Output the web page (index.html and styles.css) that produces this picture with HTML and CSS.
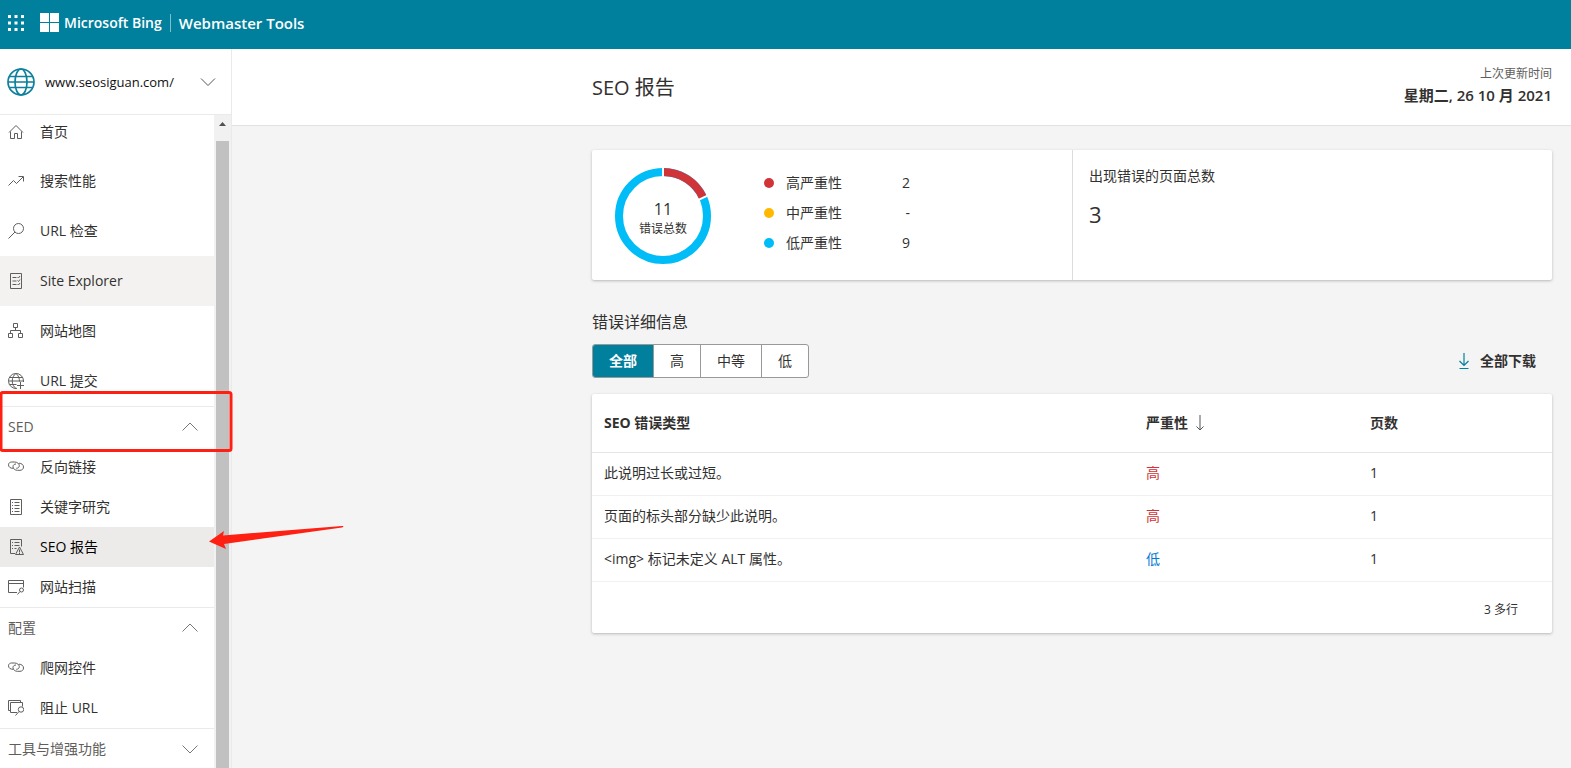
FILE: index.html
```html
<!DOCTYPE html>
<html lang="zh-CN">
<head>
<meta charset="utf-8">
<title>SEO 报告 - Webmaster Tools</title>
<link rel="stylesheet" href="styles.css">
</head>
<body>
<header class="topbar">
  <button class="waffle" aria-label="应用">
    <svg width="16" height="16" viewBox="0 0 16 16" fill="currentColor"><path d="M0 0h3v3H0zM6.500 0h3v3h-3zM13 0h3v3h-3zM0 6.500h3v3H0zM6.500 6.500h3v3h-3zM13 6.500h3v3h-3zM0 13h3v3H0zM6.500 13h3v3h-3zM13 13h3v3h-3z"/></svg>
  </button>
  <svg class="ms-logo" width="19" height="19" viewBox="0 0 19 19" fill="currentColor"><path d="M0 0h9v9H0zM10 0h9v9h-9zM0 10h9v9H0zM10 10h9v9h-9z"/></svg>
  <span class="brand">Microsoft Bing</span>
  <span class="brand-sep"></span>
  <span class="product">Webmaster Tools</span>
</header>
<div class="shell">
  <aside class="sidebar">
    <button class="site">
      <svg width="28" height="28" viewBox="0 0 28 28" fill="none" stroke="#0d809c" stroke-width="1.700"><circle cx="14" cy="14" r="13"/><ellipse cx="14" cy="14" rx="6" ry="13"/><path d="M2.500 8.500h23M1 14h26M2.500 19.500h23" /></svg>
      <span class="site-name">www.seosiguan.com/</span>
      <svg width="16" height="10" viewBox="0 0 16 10" fill="none" stroke="#555"><path d="M1 1.500l7 7 7-7"/></svg>
    </button>
    <div class="scroll">
      <nav class="nav">
        <a class="item tall first" href="#"><svg class="ic" viewBox="0 0 16 16"><path d="M1 8.500L8 1.500l7 7M2.500 7.500v7h4v-5h3v5h4v-7"/></svg>首页</a>
        <a class="item tall" href="#"><svg class="ic" viewBox="0 0 16 16"><path d="M.5 12.500l5-5 3 3L15 4M10.500 3.500h5v5"/></svg>搜索性能</a>
        <a class="item tall" href="#"><svg class="ic" viewBox="0 0 16 16"><circle cx="10.500" cy="5.500" r="5"/><path d="M7 9l-6.500 6.500"/></svg>URL 检查</a>
        <a class="item tall hover" href="#"><svg class="ic" viewBox="0 0 16 16"><path d="M2.500.5h11v15h-11zM4.500 4.500h4M4.500 8h4M4.500 11.500h4M9.500 4l1 1 1.500-2M9.500 7.500l1 1 1.500-2M9.500 11l1 1 1.500-2"/></svg>Site Explorer</a>
        <a class="item tall" href="#"><svg class="ic" viewBox="0 0 16 16"><path d="M5.500.5h4v4h-4zM.5 10.500h4v4h-4zM10.500 10.500h4v4h-4zM7.500 4.500v3M2.500 10.500v-3h10v3"/></svg>网站地图</a>
        <a class="item tall" href="#"><svg class="ic" viewBox="0 0 16 16"><path d="M9 15.400A7.500 7.500 0 1 1 15.500 8v1M.5 8h15M1.500 4.500h13M1.500 11.500h7M8 15.500c-5-3-5-12 0-15 2.500 2 3.500 5 3.500 8M12.500 9v7M9 12.500h7"/></svg>URL 提交</a>
        <button class="group">SED<svg class="chev" viewBox="0 0 16 10"><path d="M.5 8.500L8 1l7.500 7.500"/></svg></button>
        <a class="item" href="#"><svg class="ic" viewBox="0 0 16 16"><path d="M5 9.300C2.500 9.300.5 8 .5 5.800.5 4 2 3 3.800 3h2.700c2.500 0 4.800 1.500 4.800 3.700 0 1.600-1.300 2.600-3 2.600M11 4.200c2.500 0 4.500 1.500 4.500 3.800 0 2-1.500 3.300-3.500 3.300H9.500C7 11.300 5 9.800 5 7.700 5 6 6.300 5 8 5"/></svg>反向链接</a>
        <a class="item" href="#"><svg class="ic" viewBox="0 0 16 16"><path d="M2.500.5h11v15h-11zM4 3.500h1M6.500 3.500h5M4 6.500h1M6.500 6.500h5M4 9.500h1M6.500 9.500h5M4 12.500h1M6.500 12.500h5"/></svg>关键字研究</a>
        <a class="item active" href="#"><svg class="ic" viewBox="0 0 16 16"><path d="M7 14.500H2.500V.5h11v7M4 3.500h1M6.500 3.500h5M4 6.500h1M6.500 6.500h5M4 9.500h1M6.500 9.500h2M11.500 8l4 7.500h-8zM11.500 10.500v3M11.500 14v1"/></svg>SEO 报告</a>
        <a class="item" href="#"><svg class="ic" viewBox="0 0 16 16"><path d="M9 13.500H.5v-12h15v7M.5 4.500h15M9.500 15.500l2.500-3"/><circle cx="13.500" cy="11" r="2"/></svg>网站扫描</a>
        <button class="group">配置<svg class="chev" viewBox="0 0 16 10"><path d="M.5 8.500L8 1l7.500 7.500"/></svg></button>
        <a class="item" href="#"><svg class="ic" viewBox="0 0 16 16"><path d="M5 9.300C2.500 9.300.5 8 .5 5.800.5 4 2 3 3.800 3h2.700c2.500 0 4.800 1.500 4.800 3.700 0 1.600-1.300 2.600-3 2.600M11 4.200c2.500 0 4.500 1.500 4.500 3.800 0 2-1.500 3.300-3.500 3.300H9.500C7 11.300 5 9.800 5 7.700 5 6 6.300 5 8 5"/></svg>爬网控件</a>
        <a class="item" href="#"><svg class="ic" viewBox="0 0 16 16"><path d="M2.500 10.500h-2V.5h12v2M9 12.500H2.500v-10h12v4M7.500 15.500l3.500-4"/><circle cx="13" cy="9.500" r="2.700"/></svg>阻止 URL</a>
        <button class="group">工具与增强功能<svg class="chev" viewBox="0 0 16 10"><path d="M.5 1.500L8 9l7.500-7.500"/></svg></button>
      </nav>
      <div class="scrollbar">
        <svg width="7" height="4" viewBox="0 0 7 4" fill="#505050"><path d="M0 4L3.500 0 7 4z"/></svg>
        <div class="thumb"></div>
      </div>
    </div>
  </aside>
  <main class="main">
    <div class="page-head">
      <div class="wrap head-row">
        <h1>SEO 报告</h1>
        <div class="updated"><span>上次更新时间</span><strong>星期二, 26 10 月 2021</strong></div>
      </div>
    </div>
    <div class="wrap">
      <section class="card summary">
        <div class="half chart">
          <div class="donut">
            <svg width="96" height="96" viewBox="0 0 96 96" fill="none" stroke-width="8"><circle cx="48" cy="48" r="44" stroke="#00bcf7"/><path d="M48 4A44 44 0 0 1 88.020 29.720" stroke="#d13438"/><path d="M48 0v9M92.570 27.650l-9.100 4.150" stroke="#fff" stroke-width="2"/></svg>
            <div class="donut-label"><b>11</b><span>错误总数</span></div>
          </div>
          <dl class="legend">
            <div><dt class="red">高严重性</dt><dd>2</dd></div>
            <div><dt class="amber">中严重性</dt><dd>-</dd></div>
            <div><dt class="blue">低严重性</dt><dd>9</dd></div>
          </dl>
        </div>
        <div class="half pages">
          <span>出现错误的页面总数</span>
          <span class="big">3</span>
        </div>
      </section>
      <h2>错误详细信息</h2>
      <div class="tools">
        <div class="tabs">
          <button class="on">全部</button><button>高</button><button>中等</button><button>低</button>
        </div>
        <button class="download"><svg width="12" height="18" viewBox="0 0 12 18" fill="none" stroke="#00809d" stroke-width="1.200"><path d="M6 1v12.500M1.500 9l4.500 4.500L10.500 9M1.500 16.500h9"/></svg>全部下载</button>
      </div>
      <section class="card">
        <table>
          <thead><tr><th class="c1">SEO 错误类型</th><th class="c2"><span class="sort">严重性<svg width="8" height="16" viewBox="0 0 8 16" fill="none" stroke="#555"><path d="M4 0v15M.5 11.500L4 15l3.500-3.500"/></svg></span></th><th>页数</th></tr></thead>
          <tbody>
            <tr><td>此说明过长或过短。</td><td class="high">高</td><td>1</td></tr>
            <tr><td>页面的标头部分缺少此说明。</td><td class="high">高</td><td>1</td></tr>
            <tr><td>&lt;img&gt; 标记未定义 ALT 属性。</td><td class="low">低</td><td>1</td></tr>
          </tbody>
        </table>
        <div class="foot">3 多行</div>
      </section>
    </div>
  </main>
</div>
<svg class="note" width="344" height="165" viewBox="0 0 344 165"><rect x="1" y="1.500" width="230" height="58" rx="2" fill="none" stroke="#ff2014" stroke-width="3"/><path d="M209 150.500L224 140l-1 4.500L342 135c2 0 2 1 0 1.500L224 153l2 5z" fill="#ff2014"/></svg>
</body>
</html>
```
FILE: styles.css
```css
* { box-sizing: border-box; }
body {
  margin: 0;
  height: 100vh;
  display: flex;
  flex-direction: column;
  position: relative;
  overflow: hidden;
  background: #f4f4f4;
  color: #323130;
  font: 14px/20px "Open Sans", "Noto Sans CJK SC", sans-serif;
}
button { font: inherit; color: inherit; border: 0; padding: 0; background: none; cursor: pointer; }
a { color: inherit; text-decoration: none; }
h1, h2, dl, dd { margin: 0; font-weight: 400; }

.topbar {
  display: flex;
  align-items: center;
  flex: none;
  height: 49px;
  padding: 0 8px 4px;
  background: #00809d;
  color: #fff;
  font-weight: 600;
}
.waffle { display: flex; margin-right: 16px; }
.brand { margin-left: 5px; }
.brand-sep { width: 1px; height: 18px; margin: 0 8px; background: #7fbfce; }
.product { font-size: 15px; }

.shell { display: flex; flex: 1; min-height: 0; }
.sidebar {
  display: flex;
  flex-direction: column;
  flex: none;
  width: 232px;
  background: #fff;
  border-right: 1px solid #eaeaea;
}
.site {
  display: flex;
  align-items: center;
  flex: none;
  height: 66px;
  padding: 0 15px 0 7px;
  gap: 10px;
  border-bottom: 1px solid #eaeaea;
  text-align: left;
}
.site-name { flex: 1; font-size: 13px; color: #111; }
.scroll { display: flex; flex: 1; min-height: 0; overflow: hidden; }
.nav { flex: 1; }
.item { display: flex; align-items: center; gap: 16px; height: 40px; padding-left: 8px; }
.tall { height: 50px; }
.first { height: 41px; padding-bottom: 8px; }
.hover { background: #f3f2f1; }
.active { background: #edebe9; color: #000; }
.ic { width: 16px; height: 16px; fill: none; stroke: #605e5c; }
.group {
  display: flex;
  align-items: center;
  justify-content: space-between;
  width: 100%;
  height: 41px;
  padding: 0 16px 0 8px;
  border-top: 1px solid #eaeaea;
  color: #605e5c;
}
.chev { width: 16px; height: 10px; fill: none; stroke: #777; }
.scrollbar {
  display: flex;
  flex-direction: column;
  align-items: center;
  gap: 15px;
  width: 17px;
  padding-top: 7px;
  background: #f1f1f1;
}
.scrollbar svg { flex: none; }
.thumb { flex: 1; width: 13px; background: #c1c1c1; }

.main { flex: 1; }
.page-head { background: #fff; border-bottom: 1px solid #e1e1e1; margin-bottom: 24px; }
.wrap { max-width: 960px; margin: 0 19px 0 auto; }
.head-row { display: flex; align-items: center; justify-content: space-between; height: 76px; padding-top: 2px; }
h1 { font-size: 20px; line-height: 28px; }
.updated { display: flex; flex-direction: column; align-items: flex-end; padding-bottom: 6px; }
.updated span { font-size: 12px; color: #605e5c; }
.updated strong { font-size: 15px; font-weight: 600; line-height: 22px; }

.card { background: #fff; border-radius: 2px; box-shadow: 0 1px 3px rgba(0, 0, 0, .25); }
.summary { display: grid; grid-template-columns: 1fr 1fr; }
.half { min-height: 130px; }
.chart { display: flex; align-items: center; padding-left: 23px; gap: 53px; }
.donut { display: grid; place-items: center; padding-top: 2px; }
.donut > * { grid-area: 1 / 1; }
.donut-label { display: flex; flex-direction: column; align-items: center; padding-top: 6px; }
.donut-label b { font-size: 16px; font-weight: 400; }
.donut-label span { font-size: 12px; }
.legend { padding-bottom: 4px; }
.legend div { display: flex; justify-content: space-between; width: 146px; line-height: 30px; }
.legend dt { display: flex; align-items: center; gap: 12px; }
.legend dt::before { content: ""; width: 10px; height: 10px; border-radius: 50%; background: currentColor; }
.red::before { color: #d13438; }
.amber::before { color: #ffb900; }
.blue::before { color: #00bcf7; }
.pages { display: flex; flex-direction: column; gap: 12px; padding: 16px; border-left: 1px solid #dcdcdc; }
.pages .big { font-size: 22px; line-height: 32px; }

h2 { margin: 30px 0 10px; font-size: 16px; line-height: 24px; }
.tools { display: flex; align-items: center; justify-content: space-between; padding-right: 16px; margin-bottom: 16px; }
.tabs { display: flex; border: 1px solid #999; border-radius: 3px; overflow: hidden; background: #fff; }
.tabs button { height: 32px; padding: 0 16px; }
.tabs button + button { border-left: 1px solid #999; }
.tabs .on { background: #00809d; color: #fff; font-weight: 600; }
.download { display: flex; align-items: center; gap: 10px; font-weight: 600; }

table { width: 100%; border-collapse: collapse; table-layout: fixed; }
th, td { height: 43px; padding: 0 0 2px 12px; text-align: left; border-bottom: 1px solid #f0f0f0; }
td:not(:first-child), th:not(:first-child) { padding-left: 0; }
th { height: 58px; padding-bottom: 0; font-weight: 600; border-color: #e5e5e5; }
th:first-child { font-weight: 700; }
.c1 { width: 554px; }
.c2 { width: 224px; }
.sort { display: flex; align-items: center; gap: 8px; }
.high { color: #d13438; }
.low { color: #0078d4; }
.foot { padding: 18px 34px 13px; text-align: right; font-size: 12px; }

.note { position: absolute; left: 0; top: 391px; pointer-events: none; }
```
